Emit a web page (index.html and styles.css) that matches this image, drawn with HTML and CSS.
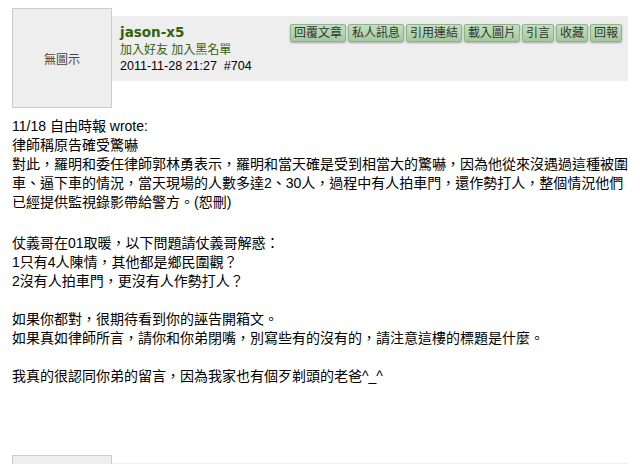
FILE: index.html
```html
<!DOCTYPE html>
<html lang="zh-Hant">
<head>
    <meta charset="UTF-8">
    <title>jason-x5 #704</title>
    <link rel="stylesheet" href="styles.css">
</head>
<body>

<div class="thread">
    <div class="post">
        <div class="post-head">
            <div class="avatar">無圖示</div>
            <div class="head-bar">
                <div class="user-info">
                    <div class="username">jason-x5</div>
                    <div class="user-links"><a href="#">加入好友</a> <a href="#">加入黑名單</a></div>
                    <div class="post-date">2011-11-28 21:27 &nbsp;#704</div>
                </div>
                <div class="actions">
                    <button>回覆文章</button>
                    <button>私人訊息</button>
                    <button>引用連結</button>
                    <button>載入圖片</button>
                    <button>引言</button>
                    <button>收藏</button>
                    <button>回報</button>
                </div>
            </div>
        </div>
        <div class="post-body">
            <div class="quote">
                11/18 自由時報 wrote:<br>
                律師稱原告確受驚嚇<br>
                對此，羅明和委任律師郭林勇表示，羅明和當天確是受到相當大的驚嚇，因為他從來沒遇過這種被圍車、逼下車的情況，當天現場的人數多達2、30人，過程中有人拍車門，還作勢打人，整個情況他們已經提供監視錄影帶給警方。(恕刪)
            </div>
            仗義哥在01取暖，以下問題請仗義哥解惑：<br>
            1只有4人陳情，其他都是鄉民圍觀？<br>
            2沒有人拍車門，更沒有人作勢打人？<br>
            <br>
            如果你都對，很期待看到你的誣告開箱文。<br>
            如果真如律師所言，請你和你弟閉嘴，別寫些有的沒有的，請注意這樓的標題是什麼。<br>
            <br>
            我真的很認同你弟的留言，因為我家也有個歹剃頭的老爸^_^
        </div>
    </div>

    <div class="post">
        <div class="post-head">
            <div class="avatar"></div>
            <div class="head-bar"></div>
        </div>
    </div>
</div>

</body>
</html>
```

FILE: styles.css
```css
* {
    font-family: "Liberation Sans", "Noto Sans CJK TC", sans-serif;
}

body {
    margin: 0;
    background-color: #fff;
    color: #000;
}

.thread {
    padding: 8px 12px 0 12px;
    width: 616px;
}

.post {
    margin-bottom: 8px;
}

.post-head {
    display: flex;
}

.avatar {
    width: 98px;
    height: 98px;
    border: 1px solid #cccccc;
    background-color: #eeeeee;
    color: #444;
    font-size: 12px;
    display: flex;
    align-items: center;
    justify-content: center;
    flex-shrink: 0;
}

.head-bar {
    flex: 1;
    margin-top: 8px;
    height: 65px;
    background-color: #eeeeee;
    display: flex;
    justify-content: space-between;
    align-items: flex-start;
    padding: 0 6px 0 8px;
}

.user-info {
    padding-top: 8px;
}

.username {
    font-family: "DejaVu Sans", sans-serif;
    font-weight: bold;
    font-size: 13.5px;
    line-height: 16px;
    color: #2f6410;
}

.user-links {
    font-size: 12px;
    line-height: 17px;
    margin-top: 2px;
}

.user-links a {
    color: #2f6410;
    text-decoration: none;
}

.post-date {
    font-size: 12.5px;
    line-height: 14px;
}

.actions {
    display: flex;
    gap: 2px;
    margin-top: 8px;
}

.actions button {
    font-size: 12px;
    line-height: 16px;
    height: 18px;
    padding: 0 3px;
    color: #333;
    border: 1px solid #8db389;
    border-radius: 2px;
    background: linear-gradient(#c4e0c0, #a2c99d);
    box-shadow: 0 1px 2px rgba(0, 0, 0, 0.3);
}

.post-body {
    margin-top: 9px;
    font-size: 14px;
    line-height: 19px;
    padding-bottom: 61px;
}

.quote {
    margin-bottom: 22px;
}
```
